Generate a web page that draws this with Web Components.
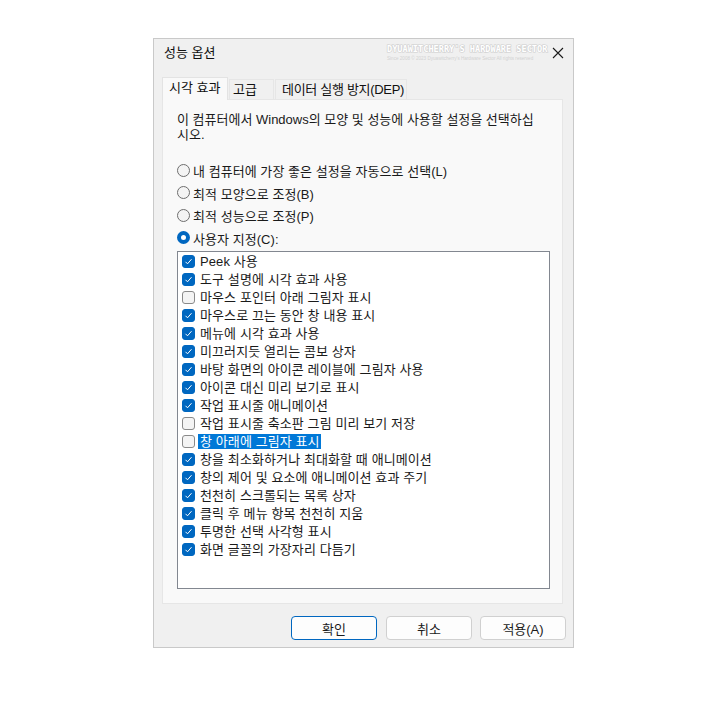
<!DOCTYPE html>
<html lang="ko">
<head>
<meta charset="utf-8">
<title>성능 옵션</title>
<style>
html, body { margin: 0; background: #fff; }
body { padding: 38px 0 0 153px; font: 13px "Liberation Sans", "Noto Sans CJK KR", sans-serif; color: #111; }
</style>
</head>
<body>
<perf-dialog heading="성능 옵션">
    <perf-tabs slot="tabs"></perf-tabs>
    <perf-radio>내 컴퓨터에 가장 좋은 설정을 자동으로 선택(L)</perf-radio>
    <perf-radio>최적 모양으로 조정(B)</perf-radio>
    <perf-radio>최적 성능으로 조정(P)</perf-radio>
    <perf-radio checked>사용자 지정(C):</perf-radio>
    <perf-list>
        <perf-check checked>Peek 사용</perf-check>
        <perf-check checked>도구 설명에 시각 효과 사용</perf-check>
        <perf-check>마우스 포인터 아래 그림자 표시</perf-check>
        <perf-check checked>마우스로 끄는 동안 창 내용 표시</perf-check>
        <perf-check checked>메뉴에 시각 효과 사용</perf-check>
        <perf-check checked>미끄러지듯 열리는 콤보 상자</perf-check>
        <perf-check checked>바탕 화면의 아이콘 레이블에 그림자 사용</perf-check>
        <perf-check checked>아이콘 대신 미리 보기로 표시</perf-check>
        <perf-check checked>작업 표시줄 애니메이션</perf-check>
        <perf-check>작업 표시줄 축소판 그림 미리 보기 저장</perf-check>
        <perf-check selected>창 아래에 그림자 표시</perf-check>
        <perf-check checked>창을 최소화하거나 최대화할 때 애니메이션</perf-check>
        <perf-check checked>창의 제어 및 요소에 애니메이션 효과 주기</perf-check>
        <perf-check checked>천천히 스크롤되는 목록 상자</perf-check>
        <perf-check checked>클릭 후 메뉴 항목 천천히 지움</perf-check>
        <perf-check checked>투명한 선택 사각형 표시</perf-check>
        <perf-check checked>화면 글꼴의 가장자리 다듬기</perf-check>
    </perf-list>
    <perf-button slot="buttons" primary>확인</perf-button>
    <perf-button slot="buttons">취소</perf-button>
    <perf-button slot="buttons">적용(A)</perf-button>
</perf-dialog>
<script>
"use strict"
{
    const define = (name, html, extra) => {
        const template = document.createElement('template');
        template.innerHTML = html;
        class Element extends HTMLElement {
            constructor() {
                super();
                this.attachShadow({ mode: 'open' }).appendChild(template.content.cloneNode(true));
                if (extra) extra(this);
            }
        }
        customElements.define(name, Element);
    };

    define('perf-dialog', `
<style>
:host { display: flex; flex-direction: column; box-sizing: border-box; width: 421px; height: 610px; background: #f0f0f0; border: 1px solid #c9c9c9; }
.title { display: flex; align-items: flex-start; box-sizing: border-box; height: 38px; padding: 3px 0 0 10px; }
.heading { line-height: 22px; flex: 1; }
.mark { width: 160px; margin: 2px 5px 0 0; }
.mark b { display: block; font: bold 8.6px/10px "DejaVu Sans Mono", monospace; color: #fff; -webkit-text-stroke: 1.2px #cdcdcd; paint-order: stroke fill; white-space: nowrap; }
.mark i { display: block; margin-top: 2px; font: normal 4.6px/6px "Liberation Sans", sans-serif; color: #d2d2d2; white-space: nowrap; }
svg { margin: 5px 9px 0 0; }
.body { margin: 0 10px 0 8px; }
.panel { box-sizing: border-box; height: 505px; background: #f9f9f9; border: 1px solid #e6e6e6; padding: 11px 12px 0 14px; }
.note { box-sizing: border-box; line-height: 15px; height: 48px; padding-top: 1px; width: 358px; color: #1a1a1a; }
.buttons { display: flex; justify-content: flex-end; gap: 8px; margin: 12px 7px 0 0; }
::slotted([primary]) { margin-right: 1px; }
</style>
<div class="title">
    <span class="heading" id="heading"></span>
    <div class="mark"><b>DYUAWITCHERRY'S HARDWARE SECTOR</b><i>Since 2008 © 2023 Dyuawitcherry's Hardware Sector All rights reserved</i></div>
    <svg width="12" height="12" viewBox="0 0 12 12"><path d="M1 1l10 10M11 1L1 11" stroke="#1a1a1a" stroke-width="1.1" fill="none"/></svg>
</div>
<slot name="tabs"></slot>
<div class="body">
    <div class="panel">
        <div class="note">이 컴퓨터에서 Windows의 모양 및 성능에 사용할 설정을 선택하십시오.</div>
        <slot></slot>
    </div>
</div>
<div class="buttons"><slot name="buttons"></slot></div>
`, el => { el.shadowRoot.getElementById('heading').textContent = el.getAttribute('heading'); });

    define('perf-tabs', `
<style>
:host { display: flex; align-items: flex-end; height: 22px; margin: 0 0 0 8px; position: relative; z-index: 1; }
div { box-sizing: border-box; height: 20px; line-height: 19px; background: #f0f0f0; border: 1px solid #e6e6e6; border-bottom: 0; padding-left: 3px; margin-left: 1px; white-space: nowrap; }
.on { height: 23px; margin: 0 0 -1px; padding: 0 0 0 6px; width: 66px; background: #f9f9f9; border-color: #e3e3e3; }
</style>
<div class="on">시각 효과</div>
<div style="width:45px">고급</div>
<div style="width:132px;padding-left:6px;letter-spacing:-.3px">데이터 실행 방지(DEP)</div>
`);

    define('perf-radio', `
<style>
:host { display: flex; align-items: center; height: 22.5px; gap: 3px; color: #1a1a1a; letter-spacing: .05px; }
i { box-sizing: border-box; width: 13px; height: 13px; border-radius: 50%; border: 1px solid #6e6e6e; background: #f4f4f4; }
:host([checked]) i { border: 4px solid #0067c0; background: #fff; }
span { padding-top: 1px; }
</style>
<i></i><span><slot></slot></span>
`);

    define('perf-list', `
<style>
:host { display: block; box-sizing: border-box; height: 338px; margin-top: 2px; padding: 0 0 0 4px; background: #fff; border: 1px solid #828790; }
</style>
<slot></slot>
`);

    define('perf-check', `
<style>
:host { display: flex; align-items: center; height: 18px; gap: 3px; color: #1a1a1a; letter-spacing: .1px; }
i { display: flex; align-items: center; justify-content: center; box-sizing: border-box; width: 13px; height: 13px; border-radius: 3px; border: 1px solid #8a8a8a; background: #f4f4f4; }
svg { display: none; }
:host([checked]) i { background: #0067c0; border-color: #0067c0; }
:host([checked]) svg { display: block; }
span { padding: 1px 1px 0 2px; line-height: 14px; }
:host([selected]) span { background: #0078d7; color: #fff; }
</style>
<i><svg width="9" height="9" viewBox="0 0 9 9"><path d="M1.5 4.8l2 2 4-4.6" stroke="#fff" stroke-width="1" fill="none"/></svg></i><span><slot></slot></span>
`);

    define('perf-button', `
<style>
:host { display: flex; align-items: center; justify-content: center; box-sizing: border-box; width: 86px; height: 24px; padding-top: 1px; background: #fdfdfd; border: 1px solid #d0d0d0; border-radius: 4px; color: #1a1a1a; }
:host([primary]) { border-color: #0067c0; }
</style>
<slot></slot>
`);
}
</script>
</body>
</html>
